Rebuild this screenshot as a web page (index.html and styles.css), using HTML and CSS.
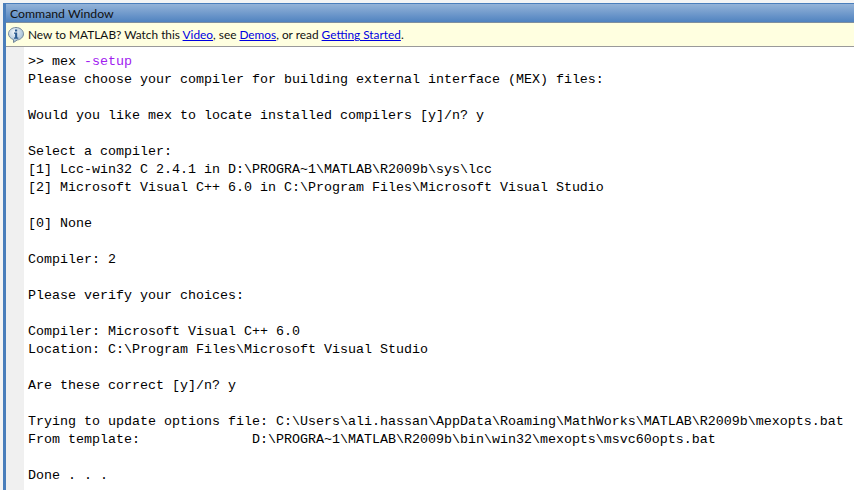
FILE: index.html
```html
<!DOCTYPE html>
<html lang="en">
<head>
<meta charset="utf-8">
<title>Command Window</title>
<link rel="stylesheet" href="styles.css">
</head>
<body>
<div class="window">
  <div class="title">Command Window</div>
  <div class="notice">
    <svg class="info" width="16" height="16" viewBox="0 0 16 16">
      <defs>
        <radialGradient id="g" cx="40%" cy="30%" r="75%">
          <stop offset="0" stop-color="#f4f8fb"/>
          <stop offset="1" stop-color="#94b4d0"/>
        </radialGradient>
      </defs>
      <path d="M8 .5c4.100 0 7.500 2.800 7.500 6.300 0 3.200-2.800 5.800-6.300 6.200L5.500 15.500V12.600C2.500 11.600.5 9.400.5 6.800.5 3.300 3.900.5 8 .5z" fill="url(#g)" stroke="#74889a"/>
      <rect x="7" y="2.500" width="2.200" height="2" fill="#2a5a90"/>
      <path d="M6 5.500h3.200v5H10.300v1.300H6v-1.300h1.100V6.800H6z" fill="#2a5a90"/>
    </svg>
    <span>New to MATLAB? Watch this <a href="#">Video</a>, see <a href="#">Demos</a>, or read <a href="#">Getting Started</a>.</span>
  </div>
  <div class="body">
    <div class="gutter"></div>
<pre class="console">&gt;&gt; mex <span class="str">-setup</span>
Please choose your compiler for building external interface (MEX) files:

Would you like mex to locate installed compilers [y]/n? y

Select a compiler:
[1] Lcc-win32 C 2.4.1 in D:\PROGRA~1\MATLAB\R2009b\sys\lcc
[2] Microsoft Visual C++ 6.0 in C:\Program Files\Microsoft Visual Studio

[0] None

Compiler: 2

Please verify your choices:

Compiler: Microsoft Visual C++ 6.0
Location: C:\Program Files\Microsoft Visual Studio

Are these correct [y]/n? y

Trying to update options file: C:\Users\ali.hassan\AppData\Roaming\MathWorks\MATLAB\R2009b\mexopts.bat
From template:              D:\PROGRA~1\MATLAB\R2009b\bin\win32\mexopts\msvc60opts.bat

Done . . .</pre>
  </div>
</div>
</body>
</html>
```
FILE: styles.css
```css
html, body {
  margin: 0;
  padding: 0;
  width: 854px;
  height: 490px;
  overflow: hidden;
  background: #f4f4f4;
}
.window {
  height: 487px;
  margin-top: 3px;
  margin-left: 3px;
  border-top: 1px solid #4a7ebb;
  border-left: 3px solid #4a7ebb;
  background: #fff;
  display: flex;
  flex-direction: column;
  overflow: hidden;
}
.title {
  height: 18px;
  flex: none;
  background: linear-gradient(#94b3d8, #5083c0);
  border-bottom: 1px solid #7f8f9f;
  font: 12.25px/19px Lato, "Liberation Sans", sans-serif;
  color: #111;
  padding-left: 4px;
}
.notice {
  height: 23px;
  flex: none;
  background: #ffffe0;
  border-bottom: 1px solid #9a9a9a;
  display: flex;
  align-items: center;
  gap: 4px;
  padding-left: 2px;
  font: 11.85px Lato, "Liberation Sans", sans-serif;
  color: #111;
}
.notice a { color: #0000e0; }
.info { flex: none; }
.body { flex: 1; display: flex; min-height: 0; }
.gutter { width: 18px; flex: none; background: #f0f0f0; }
.console {
  margin: 0;
  padding: 6px 0 0 4px;
  font: 13.33px/18px "Liberation Mono", monospace;
  color: #000;
  white-space: pre;
}
.str { color: #a020f0; }
```
